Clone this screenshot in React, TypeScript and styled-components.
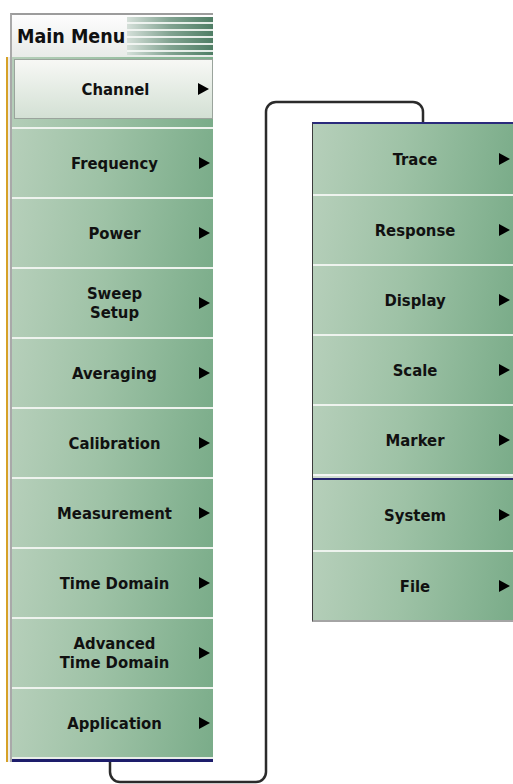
import React from 'react';
import styled, { createGlobalStyle } from 'styled-components';

type MenuItem = {
  label: string,
  selected?: boolean
}

const mainItems: MenuItem[] = [
  { label: 'Channel', selected: true },
  { label: 'Frequency' },
  { label: 'Power' },
  { label: 'Sweep\nSetup' },
  { label: 'Averaging' },
  { label: 'Calibration' },
  { label: 'Measurement' },
  { label: 'Time Domain' },
  { label: 'Advanced\nTime Domain' },
  { label: 'Application' },
];

const traceItems: MenuItem[] = [
  { label: 'Trace' },
  { label: 'Response' },
  { label: 'Display' },
  { label: 'Scale' },
  { label: 'Marker' },
];

const systemItems: MenuItem[] = [
  { label: 'System' },
  { label: 'File' },
];

const GlobalStyle = createGlobalStyle`
  html, body {
    margin: 0;
    padding: 0;
    background: #ffffff;
  }
  body {
    font-family: "DejaVu Sans Condensed", "DejaVu Sans", sans-serif;
  }
`;

const Page = styled.div`
  position: relative;
  width: 513px;
  height: 784px;
  overflow: hidden;
  display: flex;
  align-items: flex-start;
`;

const Bracket = styled.svg`
  position: absolute;
  left: 0;
  top: 0;
  z-index: 0;
  pointer-events: none;
`;

const LeftPanel = styled.div`
  position: relative;
  z-index: 1;
  width: 207px;
  margin: 13px 0 0 6px;
  display: flex;
  flex-direction: column;
`;

const Header = styled.div`
  margin-left: 4px;
  height: 42px;
  border-top: 2px solid #9c9c9c;
  border-left: 2px solid #a9a9a9;
  background: linear-gradient(#fdfdfd, #e8ebe8);
  display: flex;
  align-items: stretch;
`;

const HeaderTitle = styled.div`
  display: flex;
  align-items: center;
  padding-left: 5px;
  font-size: 19.5px;
  font-weight: bold;
  color: #101010;
  white-space: nowrap;
`;

const Stripes = styled.div`
  flex: 1;
  margin: 2px 0 2px 2px;
  background:
    linear-gradient(to right, rgba(246, 248, 246, 0.8) 0%, rgba(246, 248, 246, 0.3) 50%, rgba(246, 248, 246, 0) 100%),
    repeating-linear-gradient(to bottom, #4f7e65 0px, #4f7e65 5px, #e4ece6 5px, #e4ece6 7px);
`;

const Body = styled.div`
  border-left: 2px solid #d6a128;
  padding-left: 2px;
  background: #ececec;
  display: flex;
`;

const List = styled.div`
  flex: 1;
  border-left: 2px solid #a9a9a9;
  display: flex;
  flex-direction: column;
`;

const Footer = styled.div`
  height: 5px;
  background: linear-gradient(to bottom, #e8eee8 0px, #e8eee8 2px, #1d1d6b 2px, #1d1d6b 5px);
`;

const RightPanel = styled.div`
  position: relative;
  z-index: 1;
  width: 200px;
  margin: 122px 0 0 99px;
  border-top: 2px solid #2a2a7c;
  border-left: 1px solid #3c3c3c;
  border-bottom: 2px solid #a4a4a4;
  display: flex;
  flex-direction: column;
`;

const Divider = styled.div`
  height: 6px;
  background: linear-gradient(to bottom, #f4f6f4 0px, #f4f6f4 2px, #cfdccf 2px, #cfdccf 4px, #25256f 4px, #25256f 6px);
`;

const Row = styled.div<{ first?: boolean, selected?: boolean }>`
  height: 70px;
  box-sizing: border-box;
  display: flex;
  border-top: ${({ first, selected }) => first ? 'none' : selected ? '2px solid #e4e6e4' : '2px solid #eef3ee'};
  background: linear-gradient(100deg, #b6cfba 0%, #9ec2a6 45%, #7aac89 100%);
  padding: ${({ selected }) => selected ? '2px 0 8px 2px' : '0'};
`;

const Face = styled.div<{ selected?: boolean }>`
  flex: 1;
  display: grid;
  grid-template-columns: 1fr auto;
  align-items: center;
  border: ${({ selected }) => selected ? '1px solid #9aa49c' : 'none'};
  background: ${({ selected }) => selected ? 'linear-gradient(#f7f8f5, #d3e0d4)' : 'none'};
`;

const Label = styled.div`
  padding-left: 18px;
  text-align: center;
  white-space: pre-line;
  font-size: 16.5px;
  line-height: 19px;
  font-weight: bold;
  color: #111111;
`;

const Arrow = styled.svg`
  display: block;
  margin-right: 3px;
`;

const MenuButton: React.FC<{ item: MenuItem, first?: boolean }> = ({ item, first }) => (
  <Row first={first} selected={item.selected}>
    <Face selected={item.selected}>
      <Label>{item.label}</Label>
      <Arrow width="11" height="12" viewBox="0 0 11 12">
        <polygon points="0,0 11,6 0,12" fill="#000" />
      </Arrow>
    </Face>
  </Row>
);

const App: React.FC = () => {
  return (
    <Page>
      <GlobalStyle />
      <Bracket width="513" height="784" viewBox="0 0 513 784">
        <path
          d="M 423 140 V 112 A 10 10 0 0 0 413 102 H 276 A 10 10 0 0 0 266 112 V 772 A 10 10 0 0 1 256 782 H 120 A 10 10 0 0 1 110 772 V 750"
          fill="none"
          stroke="#2b2b2b"
          strokeWidth="2.5"
        />
      </Bracket>
      <LeftPanel>
        <Header>
          <HeaderTitle>Main Menu</HeaderTitle>
          <Stripes />
        </Header>
        <Body>
          <List>
            {mainItems.map((item, i) => (
              <MenuButton key={item.label} item={item} first={i === 0} />
            ))}
            <Footer />
          </List>
        </Body>
      </LeftPanel>
      <RightPanel>
        {traceItems.map((item, i) => (
          <MenuButton key={item.label} item={item} first={i === 0} />
        ))}
        <Divider />
        {systemItems.map((item, i) => (
          <MenuButton key={item.label} item={item} first={i === 0} />
        ))}
      </RightPanel>
    </Page>
  );
};

export default App;
